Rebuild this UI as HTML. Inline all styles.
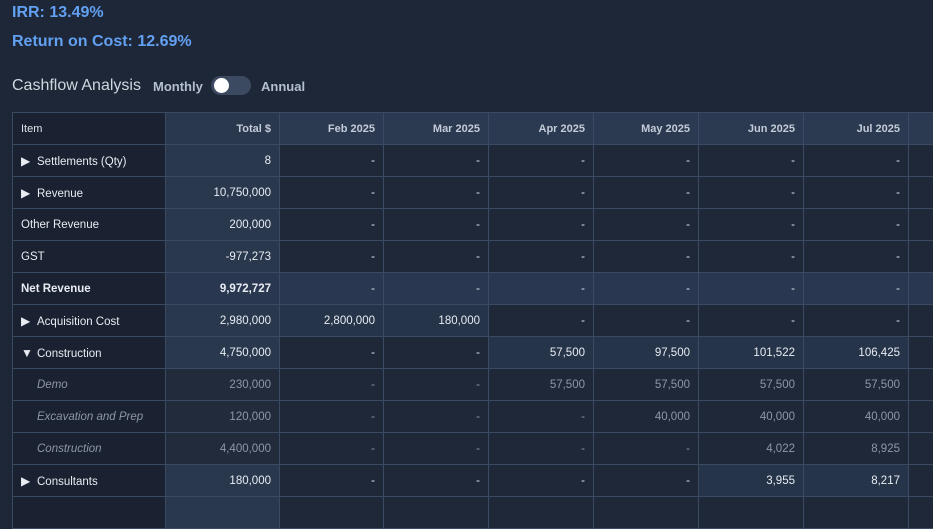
<!DOCTYPE html>
<html><head><meta charset="utf-8"><style>
body{margin:0;width:933px;height:502px;overflow:hidden;background:#1e2738;font-family:"Liberation Sans",sans-serif;position:relative;}
.irr{position:absolute;left:12px;top:4px;font-size:16px;font-weight:bold;color:#62a0f2;}
.roc{position:absolute;left:12px;top:33px;font-size:16px;font-weight:bold;color:#62a0f2;}
.cf{position:absolute;left:12px;top:77px;font-size:16px;color:#d0d6de;}
.mo{position:absolute;left:153px;top:79px;font-size:13px;font-weight:bold;color:#b4bfcf;}
.an{position:absolute;left:261px;top:79px;font-size:13px;font-weight:bold;color:#b4bfcf;}
.tg{position:absolute;left:211px;top:76px;width:40px;height:19px;border-radius:10px;background:#3b4a60;}
.tg::after{content:"";position:absolute;left:3px;top:2px;width:15px;height:15px;border-radius:50%;background:#fff;}
table{position:absolute;left:12px;top:112px;width:956px;border-collapse:collapse;table-layout:fixed;}
td,th{border:1px solid #3a4a62;height:31px;padding:0 8px;font-size:11.5px;color:#e8ecf2;text-align:right;white-space:nowrap;overflow:hidden;background:#1f2839;}
th{background:#2b3a50;color:#c3ccd8;font-size:11px;}
td:first-child,th:first-child{text-align:left;background:#1a2130;}
th:first-child{font-weight:normal;color:#dfe4ea;}
td.t,th.t{background:#2a384e;}
td.h{background:#263449;}
tr.net td{background:#293850;font-weight:bold;}
tr.net td:first-child{background:#1a2130;}
tr.sub td{color:#8e97a4;background:#1f2839;}
tr.sub td:first-child{font-style:italic;padding-left:24px;background:#1a2130;}
tr.sub td.t{background:#212b3c;}
.ar{display:inline-block;width:16px;font-size:12px;}
</style></head><body>
<div class="irr">IRR: 13.49%</div>
<div class="roc">Return on Cost: 12.69%</div>
<div class="cf">Cashflow Analysis</div>
<div class="mo">Monthly</div><div class="tg"></div><div class="an">Annual</div>
<table>
<colgroup><col style="width:153px"><col style="width:114px"><col style="width:104px"><col style="width:105px"><col style="width:105px"><col style="width:105px"><col style="width:105px"><col style="width:105px"><col style="width:60px"></colgroup>
<tr><th>Item</th><th class="t">Total $</th><th>Feb 2025</th><th>Mar 2025</th><th>Apr 2025</th><th>May 2025</th><th>Jun 2025</th><th>Jul 2025</th><th></th></tr>
<tr><td><span class="ar">▶</span>Settlements (Qty)</td><td class="t">8</td><td>-</td><td>-</td><td>-</td><td>-</td><td>-</td><td>-</td><td></td></tr>
<tr><td><span class="ar">▶</span>Revenue</td><td class="t">10,750,000</td><td>-</td><td>-</td><td>-</td><td>-</td><td>-</td><td>-</td><td></td></tr>
<tr><td>Other Revenue</td><td class="t">200,000</td><td>-</td><td>-</td><td>-</td><td>-</td><td>-</td><td>-</td><td></td></tr>
<tr><td>GST</td><td class="t">-977,273</td><td>-</td><td>-</td><td>-</td><td>-</td><td>-</td><td>-</td><td></td></tr>
<tr class="net"><td>Net Revenue</td><td>9,972,727</td><td style="font-weight:normal">-</td><td style="font-weight:normal">-</td><td style="font-weight:normal">-</td><td style="font-weight:normal">-</td><td style="font-weight:normal">-</td><td style="font-weight:normal">-</td><td></td></tr>
<tr><td><span class="ar">▶</span>Acquisition Cost</td><td class="t">2,980,000</td><td class="h">2,800,000</td><td class="h">180,000</td><td>-</td><td>-</td><td>-</td><td>-</td><td></td></tr>
<tr><td><span class="ar">▼</span>Construction</td><td class="t">4,750,000</td><td>-</td><td>-</td><td class="h">57,500</td><td class="h">97,500</td><td class="h">101,522</td><td class="h">106,425</td><td></td></tr>
<tr class="sub"><td>Demo</td><td class="t">230,000</td><td>-</td><td>-</td><td>57,500</td><td>57,500</td><td>57,500</td><td>57,500</td><td></td></tr>
<tr class="sub"><td>Excavation and Prep</td><td class="t">120,000</td><td>-</td><td>-</td><td>-</td><td>40,000</td><td>40,000</td><td>40,000</td><td></td></tr>
<tr class="sub"><td>Construction</td><td class="t">4,400,000</td><td>-</td><td>-</td><td>-</td><td>-</td><td>4,022</td><td>8,925</td><td></td></tr>
<tr><td><span class="ar">▶</span>Consultants</td><td class="t">180,000</td><td>-</td><td>-</td><td>-</td><td>-</td><td class="h">3,955</td><td class="h">8,217</td><td></td></tr>
<tr><td></td><td class="t"></td><td></td><td></td><td></td><td></td><td></td><td></td><td></td></tr>
</table>
</body></html>
